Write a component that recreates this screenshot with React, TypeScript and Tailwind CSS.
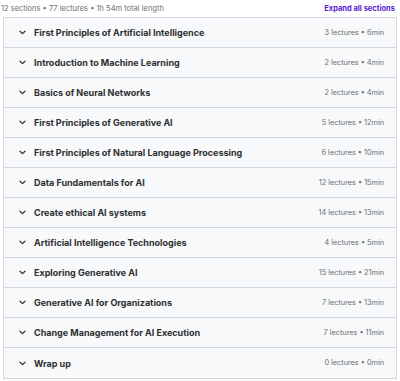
import React from 'react'

interface Section {
  title: string
  lectures: number
  length: string
}

const sections: Section[] = [
  { title: 'First Principles of Artificial Intelligence', lectures: 3, length: '6min' },
  { title: 'Introduction to Machine Learning', lectures: 2, length: '4min' },
  { title: 'Basics of Neural Networks', lectures: 2, length: '4min' },
  { title: 'First Principles of Generative AI', lectures: 5, length: '12min' },
  { title: 'First Principles of Natural Language Processing', lectures: 6, length: '10min' },
  { title: 'Data Fundamentals for AI', lectures: 12, length: '15min' },
  { title: 'Create ethical AI systems', lectures: 14, length: '13min' },
  { title: 'Artificial Intelligence Technologies', lectures: 4, length: '5min' },
  { title: 'Exploring Generative AI', lectures: 15, length: '21min' },
  { title: 'Generative AI for Organizations', lectures: 7, length: '13min' },
  { title: 'Change Management for AI Execution', lectures: 7, length: '11min' },
  { title: 'Wrap up', lectures: 0, length: '0min' },
]

function Chevron() {
  return (
    <svg width="7" height="5" viewBox="0 0 7 5" fill="none" className="shrink-0">
      <path d="M1 1.2 L3.5 3.6 L6 1.2" stroke="#2d2f31" strokeWidth="1.2" strokeLinecap="round" strokeLinejoin="round" />
    </svg>
  )
}

function App() {
  return (
    <div className="w-[400px] h-[381px] bg-white font-['Inter',sans-serif] text-[#2d2f31]">
      <div className="flex h-[17px] items-center justify-between pl-[1px] pr-[5px]">
        <span className="text-[7.5px] text-[#6a6f73]">12 sections • 77 lectures • 1h 54m total length</span>
        <button className="text-[7.5px] font-bold text-[#5624d0]">Expand all sections</button>
      </div>
      <div className="mx-[3px] border border-[#d1d7dc]">
        {sections.map((s, i) => (
          <div
            key={s.title}
            className={`flex h-[30px] items-center bg-[#f7f9fa] pl-[15px] pr-[12px] ${i < sections.length - 1 ? 'border-b border-[#d1d7dc]' : ''}`}
          >
            <Chevron />
            <span className="ml-[8px] flex-1 pt-[1px] text-[9px] font-bold">{s.title}</span>
            <span className="pt-[1px] text-[7.3px] text-[#6a6f73]">
              {s.lectures} lectures • {s.length}
            </span>
          </div>
        ))}
      </div>
    </div>
  )
}

export default App
